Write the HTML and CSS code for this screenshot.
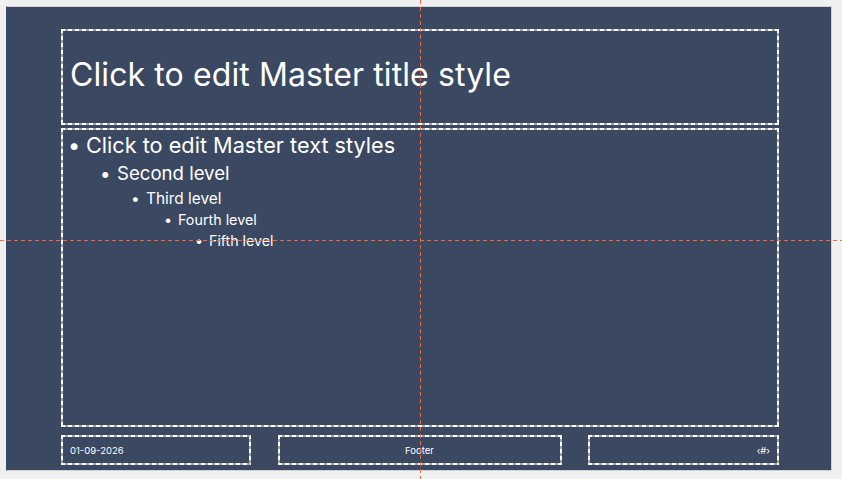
FILE: index.html
```html
<!DOCTYPE html>
<html>
<head>
<meta charset="utf-8">
<link rel="stylesheet" href="styles.css">
</head>
<body>
<div class="slide">
  <div class="ph title"><span>Click to edit Master title style</span></div>
  <div class="ph body">
    <div class="lvl l1"><span class="b">•</span>Click to edit Master text styles</div>
    <div class="lvl l2"><span class="b">•</span>Second level</div>
    <div class="lvl l3"><span class="b">•</span>Third level</div>
    <div class="lvl l4"><span class="b">•</span>Fourth level</div>
    <div class="lvl l5"><span class="b">•</span>Fifth level</div>
  </div>
  <div class="footer">
    <div class="ph foot date">01-09-2026</div>
    <div class="ph foot mid">Footer</div>
    <div class="ph foot num">‹#›</div>
  </div>
</div>
<div class="guide vguide"></div>
<div class="guide hguide"></div>
</body>
</html>
```
FILE: styles.css
```css
html, body {
  margin: 0;
  padding: 0;
  background: #f0f0f0;
  width: 842px;
  height: 479px;
  overflow: hidden;
  font-family: Inter, "Noto Sans", sans-serif;
  color: #fff;
}
.slide {
  margin: 6px 0 0 6px;
  width: 826px;
  height: 465px;
  border: 1px solid #d2d2d2;
  border-left: 1px solid #3b4862;
  background: #3b4862;
  box-sizing: border-box;
  padding: 22px 52px 5px 54px;
  display: flex;
  flex-direction: column;
}
.ph {
  position: relative;
  border: 2px solid transparent;
  box-sizing: border-box;
  flex-shrink: 0;
}
.ph::before {
  content: "";
  position: absolute;
  inset: -2px;
  pointer-events: none;
  background:
    repeating-linear-gradient(to right, #ffffff 0 4px, #a5a5a5 4px 7px) top left / 100% 2px no-repeat,
    repeating-linear-gradient(to right, #ffffff 0 4px, #a5a5a5 4px 7px) bottom left / 100% 2px no-repeat,
    repeating-linear-gradient(to bottom, #ffffff 0 4px, #a5a5a5 4px 7px) top left / 2px 100% no-repeat,
    repeating-linear-gradient(to bottom, #ffffff 0 4px, #a5a5a5 4px 7px) top right / 2px 100% no-repeat;
}
.title {
  height: 96px;
  display: flex;
  align-items: center;
  padding-left: 7px;
  padding-bottom: 5px;
  font-size: 32px;
  letter-spacing: 0.1px;
}
.body {
  margin-top: 3px;
  height: 299px;
  padding-top: 1px;
}
.lvl {
  white-space: nowrap;
  display: flex;
}
.b { display: inline-block; }
.l1 { font-size: 21.7px; line-height: 29px; padding-left: 5px; }
.l1 .b { width: 18px; }
.l2 { font-size: 18.6px; line-height: 27px; padding-left: 37px; }
.l2 .b { width: 17px; }
.l3 { font-size: 15.4px; line-height: 24px; padding-left: 68px; }
.l3 .b { width: 15px; }
.l4 { font-size: 14.3px; line-height: 18px; padding-left: 101px; }
.l4 .b { width: 14px; }
.l5 { font-size: 14.2px; line-height: 24px; padding-left: 132px; }
.l5 .b { width: 14px; }
.footer {
  margin-top: 8px;
  height: 30px;
  flex-shrink: 0;
  display: grid;
  grid-template-columns: 190px 284px 191px;
  column-gap: 26.5px;
}
.foot {
  font-size: 9.5px;
  display: flex;
  align-items: center;
  padding: 0 7px 0 7px;
}
.mid { justify-content: center; }
.num { justify-content: flex-end; }
.guide {
  position: absolute;
  pointer-events: none;
}
.vguide {
  left: 420px;
  top: 0;
  width: 1px;
  height: 479px;
  background: repeating-linear-gradient(to bottom, #f4683a 0 4px, transparent 4px 7px);
}
.hguide {
  left: 0;
  top: 240px;
  width: 842px;
  height: 1px;
  background: repeating-linear-gradient(to right, #f4683a 0 4px, transparent 4px 7px);
}
```
